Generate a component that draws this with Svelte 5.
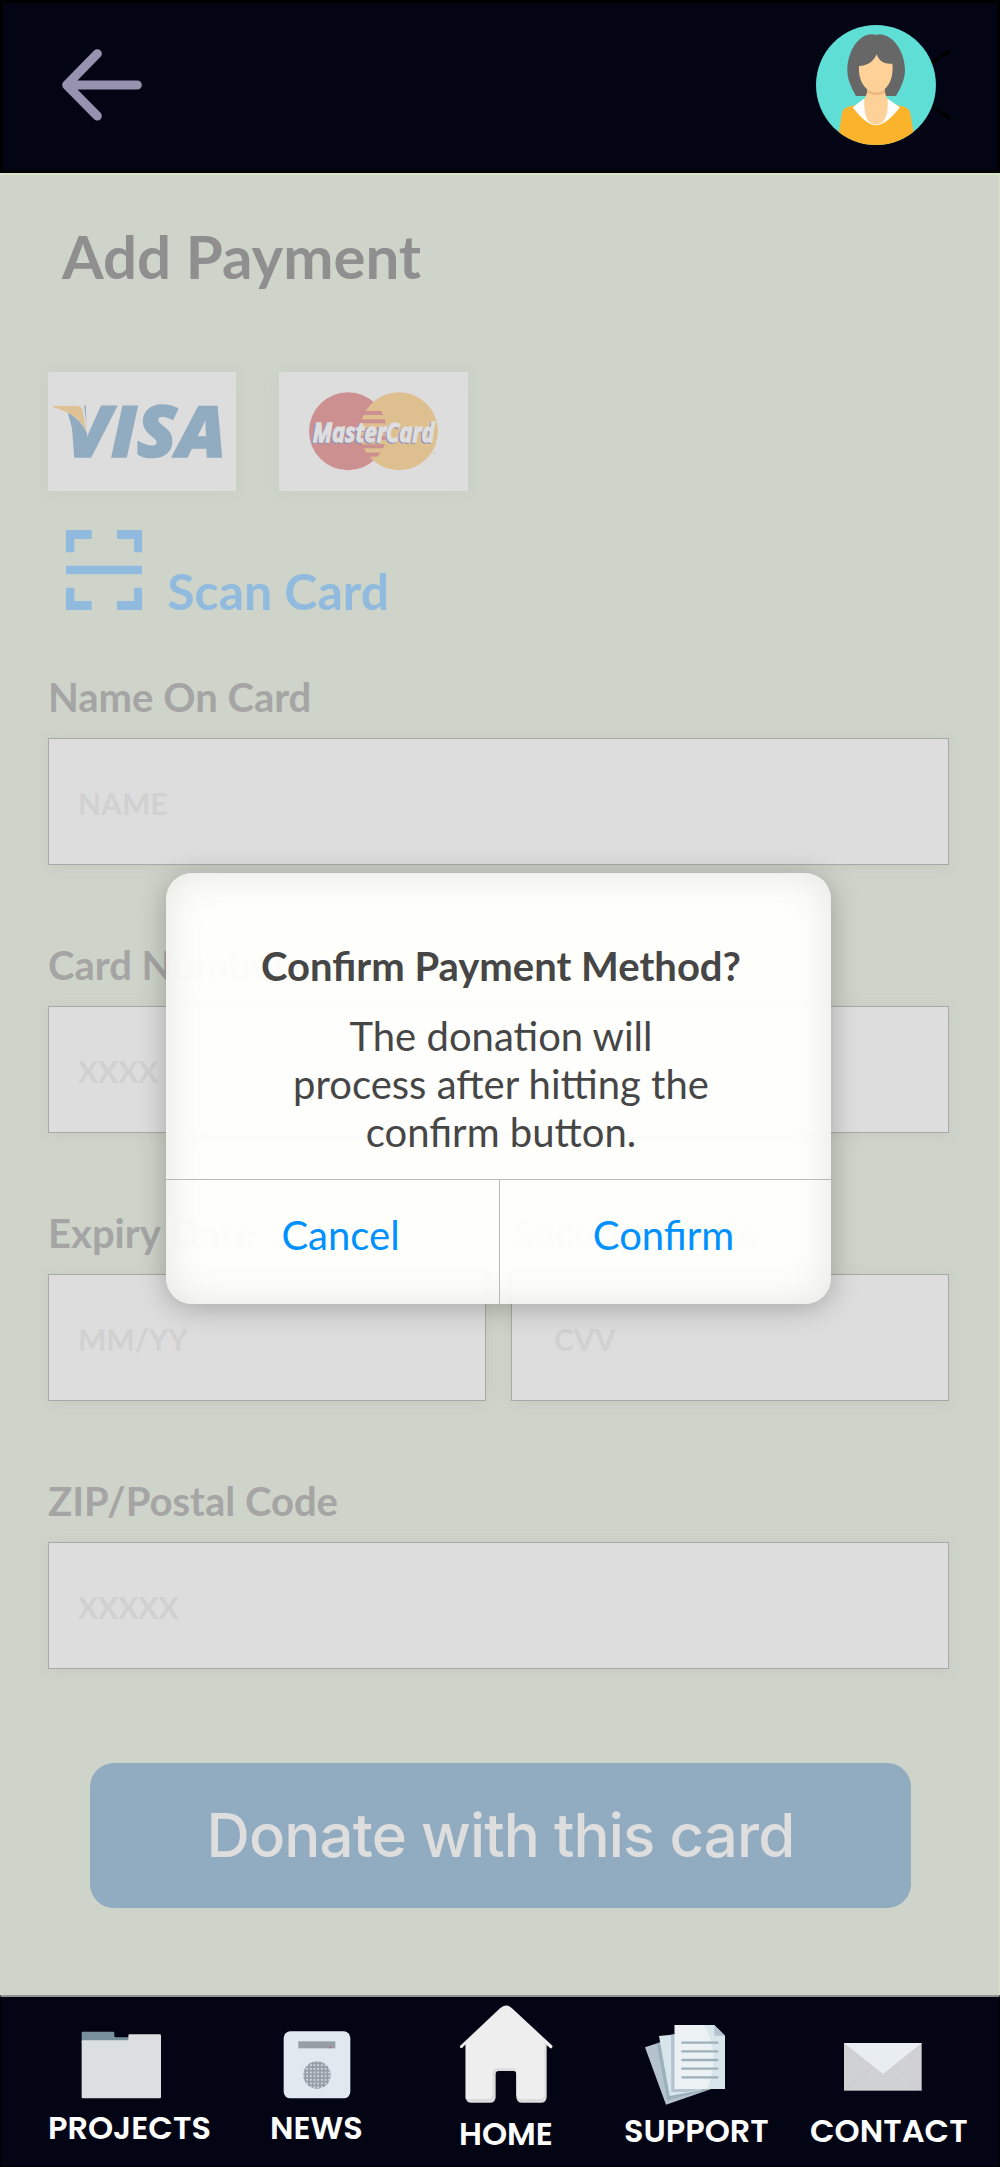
<script>
  const fields = [
    [{ label: 'Name On Card', hint: 'NAME' }],
    [{ label: 'Card Number', hint: 'XXXX' }],
    [{ label: 'Expiry Date', hint: 'MM/YY' }, { label: 'Security Code', hint: 'CVV', wide: true }],
    [{ label: 'ZIP/Postal Code', hint: 'XXXXX' }]
  ];
  const stripes = [183, 208, 233, 258, 283, 308];
</script>

<div class="screen">
  <header>
    <svg class="back" viewBox="186 147 240 216" fill="none" stroke="#9792af" stroke-width="27" stroke-linecap="round" stroke-linejoin="round">
      <path d="M412 255H201M292 161L200 255L292 348" />
    </svg>
    <svg class="avatar" viewBox="108 75 406 360">
      <path d="M455 189L511 152M455 317L511 357" stroke="#000" stroke-width="10" />
      <clipPath id="face"><circle cx="288" cy="255" r="180" /></clipPath>
      <g clip-path="url(#face)">
        <rect x="108" y="75" width="360" height="360" fill="#5eded5" />
        <path d="M228 288C211 258 202 235 202 210C202 160 232 103 276 103Q284 103 289 105Q294 103 301 103C343 106 375 160 375 210C375 235 365 260 348 288Z" fill="#676767" />
        <path d="M170 440L186 340Q188 325 205 320L250 309H327L373 320Q388 325 391 340L408 440Z" fill="#fbb32b" />
        <path d="M218 322L252 296H323L360 322Q318 376 288 376Q259 376 218 322Z" fill="#fff" />
        <path d="M262 265H314Q314 285 323 297Q327 372 288 374Q249 372 253 297Q262 285 262 265Z" fill="#fed198" />
        <path d="M262 267Q288 284 314 267L315 279Q288 293 261 279Z" fill="#efb882" />
        <path d="M237 198C263 198 281 184 290 163C299 184 309 193 337 191C343 240 319 277 288 277C256 277 234 241 237 198Z" fill="#fed198" />
      </g>
    </svg>
  </header>

  <main>
    <h1>Add Payment</h1>
    <div class="cards">
      <svg class="card" viewBox="54 66 565 356">
        <text x="108" y="320" class="visa" textLength="480" lengthAdjust="spacingAndGlyphs">VISA</text>
        <path d="M100 164H162L172 248L122 190Z" fill="#ddd" />
        <path d="M113 188C140 202 158 222 168 244L176 275L150 320Z" fill="#91abc0" />
        <path d="M69 168H140Q155 168 158 183L169 245C155 208 118 185 69 172Z" fill="#dec194" />
      </svg>
      <svg class="card" viewBox="747 66 565 356">
        <circle cx="954" cy="244" r="117" fill="#cd9090" />
        <circle cx="1107" cy="244" r="117" fill="#debf90" />
        <clipPath id="lens"><circle cx="954" cy="244" r="117" /></clipPath>
        <g clip-path="url(#lens)">
          {#each stripes as y}
            <rect x="990" y={y} width="76" height="12" fill="#cd9090" />
          {/each}
        </g>
        <text x="844" y="278" class="mc shade" textLength="366" lengthAdjust="spacingAndGlyphs">MasterCard</text>
        <text x="848" y="275" class="mc" textLength="366" lengthAdjust="spacingAndGlyphs">MasterCard</text>
        <circle cx="1213" cy="271" r="3" fill="#d8cdb9" />
        <circle cx="1213" cy="309" r="3" fill="#d8c7a9" />
      </svg>
    </div>
    <div class="scan">
      <svg viewBox="107 540 230 240" fill="#90bbde">
        <path d="M107 540H184V567H132V607H107ZM260 540H337V607H311V567H260ZM107 647H337V673H107ZM107 713H132V753H184V780H107ZM311 713H337V780H260V753H311Z" />
      </svg>
      <span>Scan Card</span>
    </div>
    <form>
      {#each fields as row}
        <div class="row">
          {#each row as f}
            <div class="field">
              <span class="label">{f.label}</span>
              <div class="input" class:wide={f.wide}>{f.hint}</div>
            </div>
          {/each}
        </div>
      {/each}
    </form>
    <button class="donate" type="button">Donate with this card</button>
  </main>

  <nav>
    <div class="item">
      <svg width="160" height="110" viewBox="149 51 480 330">
        <path d="M244 190V158Q244 155 247 155H338Q342 155 342 159V168Q342 172 346 172H385V190Z" fill="#78909c" />
        <path d="M244 183Q244 181 248 181H380Q384 181 384 177V167Q384 163 388 163H478Q482 163 482 167V351Q482 355 478 355H248Q244 355 244 351Z" fill="#dbdfe0" />
      </svg>
      <span>PROJECTS</span>
    </div>
    <div class="item">
      <svg width="90" height="110" viewBox="816 51 270 330">
        <defs>
          <pattern id="mesh" x="916" y="250" width="11" height="11" patternUnits="userSpaceOnUse">
            <rect width="11" height="11" fill="#969ea7" /><rect x="3" y="3" width="5" height="5" fill="#dbe2ea" />
          </pattern>
        </defs>
        <rect x="851" y="154" width="200" height="201" rx="20" fill="#e1e8f0" />
        <rect x="895" y="184" width="111" height="21" fill="#969ea6" />
        <path d="M991 197L993 205H989Z" fill="#ff2323" />
        <circle cx="951" cy="285" r="41" fill="url(#mesh)" />
      </svg>
      <span>NEWS</span>
    </div>
    <div class="item">
      <svg width="94" height="116" viewBox="1377 51 282 348">
        <path d="M1397 190H1640V350Q1640 368 1622 368H1567Q1549 368 1549 350V282Q1549 273 1540 273H1496Q1487 273 1487 282V350Q1487 368 1469 368H1415Q1397 368 1397 350Z" fill="#dcdcdc" />
        <path d="M1380 198L1500 85Q1518 68 1536 85L1658 198Q1656 208 1650 204L1634 190V342Q1634 357 1619 357H1567Q1550 357 1549 345V282Q1549 265 1536 265H1494Q1478 265 1478 282V342Q1478 357 1463 357H1397V193L1386 204Q1379 206 1380 198Z" fill="#eee" />
      </svg>
      <span class="nudge">HOME</span>
    </div>
    <div class="item">
      <svg width="143" height="113" viewBox="372 51 429 339">
        <path d="M435 202L520 174L640 325L498 374Z" fill="#b5c3cf" />
        <path d="M470 191L520 174L632 327L502 361Z" fill="#9bb0b9" />
        <path d="M477 168L560 160L605 330L509 348Z" fill="#d7e6eb" />
        <path d="M513 164L540 161V327H610L560 336H514Z" fill="#b5c3cf" />
        <path d="M524 135H643L675 167V327H524Z" fill="#d7e6eb" />
        <path d="M524 135H613Q664 230 621 327H524Z" fill="#ecf1f4" />
        <path d="M643 135L675 167H643Z" fill="#b5c3cf" />
        <path d="M547 188H652M547 214H652M547 240H652M547 266H652M547 292H652" stroke="#9bb0b9" stroke-width="7" stroke-linecap="round" />
      </svg>
      <span class="nudge">SUPPORT</span>
    </div>
    <div class="item">
      <svg width="156" height="113" viewBox="930 51 468 339">
        <rect x="1032" y="189" width="233" height="143" fill="#d0d1d3" />
        <path d="M1034 331L1148 235L1264 331" fill="none" stroke="#bfc1c3" stroke-width="1.5" />
        <path d="M1032 189H1265L1149 282Z" fill="#e8edf2" />
      </svg>
      <span class="nudge">CONTACT</span>
    </div>
  </nav>

  <div class="dialog" role="dialog" aria-label="Confirm Payment Method?">
    <div class="message">
      <h2>Confirm Payment Method?</h2>
      <p>The donation will<br />process after hitting the<br />confirm button.</p>
    </div>
    <div class="actions">
      <button type="button">Cancel</button>
      <button type="button">Confirm</button>
    </div>
  </div>
</div>

<style>
  :global(body) { margin: 0; }
  .screen {
    position: relative;
    width: 1000px;
    height: 2167px;
    overflow: hidden;
    display: flex;
    flex-direction: column;
    background: #ced4c9;
    font-family: Lato, sans-serif;
  }
  * { box-sizing: border-box; }
  h1, h2, p { margin: 0; }
  svg { display: block; flex: none; }
  button { border: 0; padding: 0; background: none; font: inherit; }

  header {
    height: 173px;
    flex: none;
    display: flex;
    justify-content: space-between;
    align-items: flex-start;
    border: 3px solid #000;
    background: #040514;
    padding: 22px 45.7px 0 59px;
  }
  .back { width: 80px; height: 72px; margin-top: 24px; }
  .avatar { width: 135.3px; height: 120px; }

  main {
    flex: 1;
    display: flex;
    flex-direction: column;
    border-top: 2px solid #d7e3c5;
    border-right: 1px solid #d7e3c5;
    padding: 45px 50px 0 48px;
  }
  h1 { margin-left: 14px; font-size: 60px; line-height: 72px; font-weight: 700; color: #8f8f8f; }
  .cards { display: flex; gap: 43px; margin-top: 80px; }
  .card { width: 188.3px; height: 118.6px; background: #ddd; box-shadow: 0 2px 12px rgba(190, 195, 188, .35); }
  .visa { font: italic 800 212px "Open Sans", sans-serif; fill: #91abc0; stroke: #91abc0; stroke-width: 5px; }
  .mc { font: italic 700 82px "Open Sans", sans-serif; fill: #dedede; stroke: #dedede; stroke-width: 4px; }
  .shade { fill: #8f8fb8; stroke: #8f8fb8; }
  .scan { display: flex; align-items: flex-start; gap: 25px; margin: 39.4px 0 0 17.5px; height: 91px; }
  .scan svg { width: 76.7px; height: 80px; }
  .scan span { margin-top: 31px; font-size: 50px; line-height: 60px; font-weight: 700; color: #90bbde; }

  form { display: flex; flex-direction: column; gap: 76px; margin-top: 52px; }
  .row { display: flex; gap: 25px; }
  .field { flex: 1; display: flex; flex-direction: column; gap: 17px; }
  .label { font-size: 40px; line-height: 48px; font-weight: 700; color: #a5a5a5; white-space: nowrap; }
  .input {
    height: 127px;
    border: 1px solid #a8a8a8;
    background: #ddd;
    box-shadow: 0 2px 12px rgba(180, 185, 178, .3);
    padding: 1px 29px 0;
    font-size: 30px;
    line-height: 127px;
    font-weight: 700;
    color: #d1d1d1;
  }
  .wide { padding-left: 42px; }
  .donate {
    align-self: flex-start;
    width: 821px;
    height: 145px;
    margin: 94px 0 0 42px;
    border-radius: 24px;
    background: #91abc0;
    color: #dedede;
    font: 500 60px/72px Inter, sans-serif;
    letter-spacing: -.9px;
  }

  nav {
    flex: none;
    height: 172px;
    display: grid;
    grid-template-columns: 222px 187px 165px 186px 156px;
    border: solid #000;
    border-width: 0 1px 1px;
    border-top: 2px solid #8d938f;
    background: #040514;
    padding-left: 49px;
  }
  .item { display: flex; flex-direction: column; align-items: flex-start; }
  .item span { margin-left: -2px; font-family: Poppins, Lato, sans-serif; font-size: 32px; line-height: 42px; font-weight: 600; color: #fff; white-space: nowrap; }
  .item .nudge { margin-left: 0; }

  .dialog {
    position: absolute;
    left: 166px;
    top: 873px;
    width: 665px;
    height: 431px;
    display: flex;
    flex-direction: column;
    border-radius: 26px;
    overflow: hidden;
    background: rgba(255, 255, 253, .966);
    box-shadow: 0 4px 28px rgba(0, 0, 0, .25), inset 0 0 40px rgba(0, 0, 0, .1);
    color: #464646;
    text-align: center;
  }
  .message { height: 306px; padding: 68.5px 0 0 5px; }
  h2 { font-size: 40px; line-height: 48px; font-weight: 700; }
  p { margin-top: 22px; font-size: 40px; line-height: 48px; }
  .actions { flex: 1; display: grid; grid-template-columns: 333px 1fr; border-top: 1px solid #b9bab8; }
  .actions button { font-size: 40px; line-height: 48px; color: #0091ff; padding: 0 0 14px 16px; }
  .actions button + button { border-left: 1px solid #b9bab8; padding: 0 4px 14px 0; }
</style>
